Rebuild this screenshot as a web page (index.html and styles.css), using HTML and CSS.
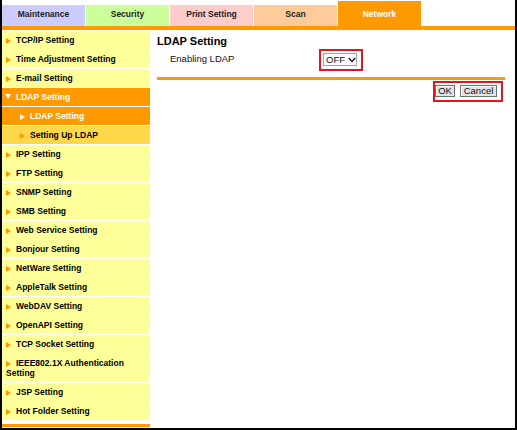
FILE: index.html
```html
<!DOCTYPE html>
<html>
<head>
<meta charset="utf-8">
<link rel="stylesheet" href="styles.css">
</head>
<body>
<div class="frame">
  <div class="tabs">
    <div class="tab t-maint">Maintenance</div>
    <div class="tab t-sec">Security</div>
    <div class="tab t-print">Print Setting</div>
    <div class="tab t-scan">Scan</div>
    <div class="tab t-net">Network</div>
  </div>
  <div class="bar"></div>
  <div class="main">
    <nav class="side">
      <ul class="menu">
        <li class="item"><span class="arr"></span>TCP/IP Setting</li>
        <li class="item"><span class="arr"></span>Time Adjustment Setting</li>
        <li class="item"><span class="arr"></span>E-mail Setting</li>
        <li class="item open"><span class="arr-down"></span>LDAP Setting</li>
        <li class="item sub cur"><span class="arr"></span>LDAP Setting</li>
        <li class="item sub"><span class="arr"></span>Setting Up LDAP</li>
        <li class="item"><span class="arr"></span>IPP Setting</li>
        <li class="item"><span class="arr"></span>FTP Setting</li>
        <li class="item"><span class="arr"></span>SNMP Setting</li>
        <li class="item"><span class="arr"></span>SMB Setting</li>
        <li class="item"><span class="arr"></span>Web Service Setting</li>
        <li class="item"><span class="arr"></span>Bonjour Setting</li>
        <li class="item"><span class="arr"></span>NetWare Setting</li>
        <li class="item"><span class="arr"></span>AppleTalk Setting</li>
        <li class="item"><span class="arr"></span>WebDAV Setting</li>
        <li class="item"><span class="arr"></span>OpenAPI Setting</li>
        <li class="item"><span class="arr"></span>TCP Socket Setting</li>
        <li class="item"><span class="arr"></span>IEEE802.1X Authentication Setting</li>
        <li class="item"><span class="arr"></span>JSP Setting</li>
        <li class="item"><span class="arr"></span>Hot Folder Setting</li>
      </ul>
      <div class="side-end"></div>
    </nav>
    <section class="content">
      <h1 class="title">LDAP Setting</h1>
      <div class="row">
        <span class="label">Enabling LDAP</span>
        <span class="hl hl-sel">
          <span class="select">OFF<svg class="chev" width="8" height="6" viewBox="0 0 8 6"><path d="M0.8 1 L4 4.4 L7.2 1" fill="none" stroke="#1a1a1a" stroke-width="1.4"/></svg></span>
        </span>
      </div>
      <div class="rule"></div>
      <div class="actions">
        <span class="hl hl-btn">
          <button class="btn btn-ok">OK</button>
          <button class="btn btn-cancel">Cancel</button>
        </span>
      </div>
    </section>
  </div>
</div>
</body>
</html>
```
FILE: styles.css
```css
html, body {
  margin: 0;
  padding: 0;
  background: #fff;
}
body {
  font-family: "Liberation Sans", Arial, sans-serif;
}
.frame {
  width: 517px;
  height: 430px;
  box-sizing: border-box;
  border: 2px solid #000;
  border-top: 0;
  background: #fff;
  overflow: hidden;
}
.tabs {
  display: flex;
  align-items: flex-end;
  height: 26px;
}
.tab {
  width: 83px;
  margin-right: 1px;
  height: 19px;
  line-height: 19px;
  padding-bottom: 2px;
  text-align: center;
  font-size: 8.5px;
  font-weight: bold;
  color: #222;
}
.t-maint { background: #ccccff; }
.t-sec { background: #ccff99; }
.t-print { background: #ffcccc; }
.t-scan { background: #ffcc99; }
.t-net {
  background: #ff9900;
  color: #fff;
  padding-top: 4px;
}
.bar {
  height: 4px;
  background: #ff9900;
}
.main {
  display: flex;
}
.side {
  width: 148px;
  flex: none;
}
.menu {
  list-style: none;
  margin: 0;
  padding: 1px 0 0;
}
.item {
  background: #ffff99;
  border-bottom: 1px solid #fff;
  padding: 4px 4px 4px 4px;
  font-size: 8.5px;
  line-height: 10px;
  font-weight: bold;
  color: #000;
}
.arr {
  display: inline-block;
  width: 0;
  height: 0;
  border-left: 5px solid #ff9900;
  border-top: 3.5px solid transparent;
  border-bottom: 3.5px solid transparent;
  margin-right: 5px;
  vertical-align: -0.5px;
}
.arr-down {
  display: inline-block;
  width: 0;
  height: 0;
  border-top: 5px solid #fff;
  border-left: 3px solid transparent;
  border-right: 3px solid transparent;
  margin-right: 5px;
  vertical-align: 1px;
}
.item.open {
  background: #ff9900;
  color: #fff;
  padding-left: 3px;
}
.item.sub {
  padding-left: 18px;
  background: #ffd84a;
}
.item.sub.cur {
  background: #ff9900;
  color: #fff;
}
.item.sub.cur .arr {
  border-left-color: #fff;
}
.side-end {
  margin-top: 3px;
  height: 3px;
  background: #ff9900;
}
.content {
  flex: 1;
  padding: 5px 10px 0 7px;
}
.title {
  margin: 0;
  font-size: 11px;
  line-height: 13px;
  font-weight: bold;
  color: #000;
}
.row {
  display: flex;
  align-items: flex-start;
  margin-top: 1px;
  padding-left: 13px;
}
.label {
  width: 149px;
  margin-top: 3px;
  font-size: 9.5px;
  line-height: 13px;
  color: #111;
}
.hl {
  display: inline-flex;
  border: 2px solid #e8141c;
}
.hl-sel {
  padding: 2px 4px 3px 2px;
}
.select {
  display: inline-flex;
  align-items: center;
  box-sizing: border-box;
  width: 34px;
  height: 13px;
  border: 1px solid #a5a5a5;
  background: #fff;
  padding-left: 2px;
  font-size: 9.5px;
  line-height: 11px;
  color: #111;
  overflow: hidden;
}
.chev {
  flex: none;
  margin-left: 3px;
}
.rule {
  margin-top: 6px;
  height: 3px;
  background: #ff9900;
}
.actions {
  display: flex;
  justify-content: flex-end;
  margin-top: 1px;
  padding-right: 2px;
}
.hl-btn {
  padding: 2px 4px 3px 0;
  gap: 5px;
}
.btn {
  appearance: none;
  margin: 0;
  padding: 0;
  box-sizing: border-box;
  height: 12px;
  border: 1px solid #707070;
  background: #e3e3e3;
  box-shadow: inset 1px 1px 0 #fff;
  font-family: "Liberation Sans", Arial, sans-serif;
  font-size: 9.5px;
  line-height: 10px;
  color: #111;
  text-align: center;
}
.btn-ok { width: 20px; }
.btn-cancel { width: 37px; }
```
